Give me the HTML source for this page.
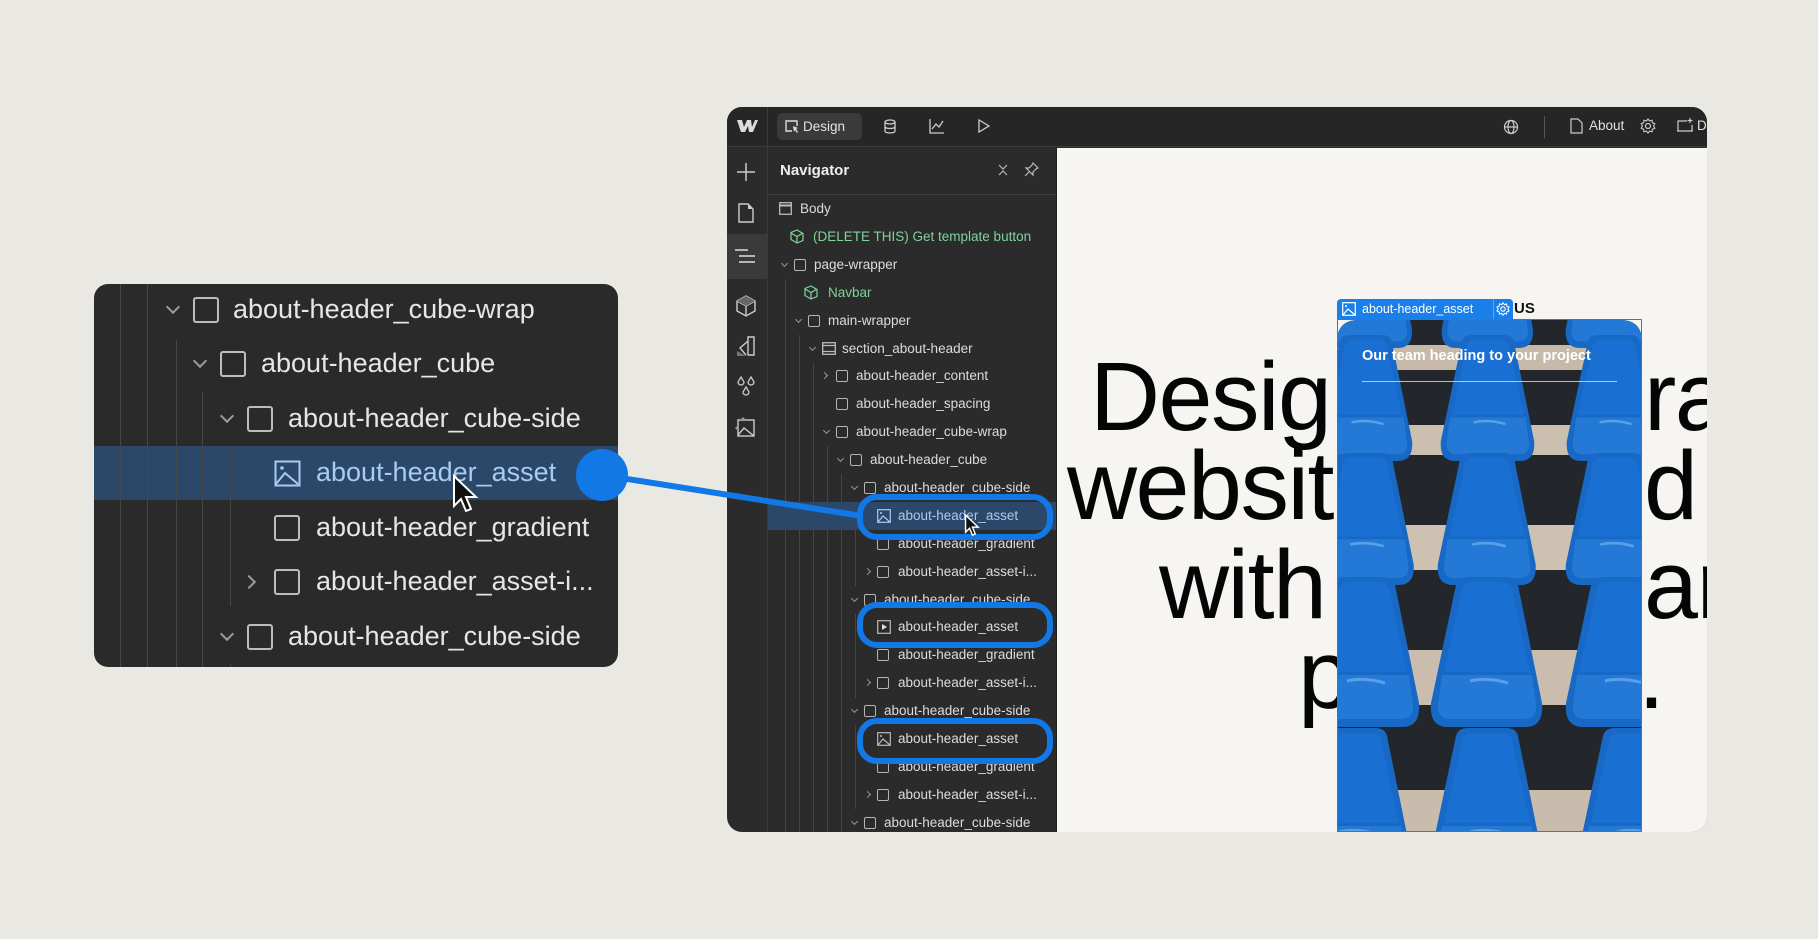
<!DOCTYPE html>
<html><head><meta charset="utf-8"><style>
*{margin:0;padding:0;box-sizing:border-box}
body{width:1818px;height:939px;background:#e9e8e2;font-family:"Liberation Sans",Arial,sans-serif;position:relative;overflow:hidden}
.a{position:absolute}
.win{position:absolute;left:0;top:0;width:1818px;height:939px;clip-path:inset(107px 111px 107px 727px round 15px)}
.row{position:absolute;left:768px;width:288px;height:28px;font-size:13.5px;color:#dcdcdc;white-space:nowrap}
.row span{position:absolute;top:6px}
.cd,.cr{position:absolute;top:10px;width:5px;height:5px;border-right:1.3px solid #9a9a9a;border-bottom:1.3px solid #9a9a9a;transform:rotate(45deg)}
.cr{top:11px;transform:rotate(-45deg)}
.bx{position:absolute;top:8px;width:12px;height:12px;border:1.3px solid #b5b5b5;border-radius:2px}
.g{color:#7fd39b}
.vl{position:absolute;width:1px;background:#444}
.lrow{position:absolute;left:94px;width:524px;height:54px;font-size:27px;color:#e6e6e6;white-space:nowrap}
.lrow span{position:absolute;top:11px}
.lcd,.lcr{position:absolute;top:19px;width:10px;height:10px;border-right:2px solid #9a9a9a;border-bottom:2px solid #9a9a9a;transform:rotate(45deg)}
.lcr{top:22px;transform:rotate(-45deg)}
.lbx{position:absolute;top:14px;width:26px;height:26px;border:2px solid #bdbdbd;border-radius:3px}
.big{position:absolute;font-size:97px;letter-spacing:-1.5px;color:#050505;line-height:1;white-space:nowrap}
.ring{position:absolute;left:857px;width:196px;height:46px;border:6px solid #1178e6;border-radius:20px}
</style></head><body>

<div class="a" style="left:94px;top:284px;width:524px;height:383px;background:#2a2a2a;border-radius:14px;overflow:hidden"></div>
<div class="a" style="left:94px;top:446px;width:524px;height:54px;background:#2c4868"></div>
<div class="vl" style="left:120px;top:284px;height:383px;background:#474747"></div>
<div class="vl" style="left:147px;top:284px;height:383px;background:#474747"></div>
<div class="vl" style="left:176px;top:340px;height:327px;background:#474747"></div>
<div class="vl" style="left:202px;top:392px;height:275px;background:#474747"></div>
<div class="vl" style="left:230px;top:446px;height:160px;background:#474747"></div>
<div class="vl" style="left:230px;top:664px;height:3px;background:#474747"></div>

<div class="lrow" style="top:283px"><i class="lcd" style="left:74px"></i><b class="lbx" style="left:99px"></b><span style="left:139px">about-header_cube-wrap</span></div>
<div class="lrow" style="top:337px"><i class="lcd" style="left:101px"></i><b class="lbx" style="left:126px"></b><span style="left:167px">about-header_cube</span></div>
<div class="lrow" style="top:392px"><i class="lcd" style="left:128px"></i><b class="lbx" style="left:153px"></b><span style="left:194px">about-header_cube-side</span></div>
<div class="lrow" style="top:446px;color:#a9cbf2"><svg class="a" style="left:180px;top:14px" width="27" height="27" viewBox="0 0 27 27"><rect x="1.5" y="1.5" width="24" height="24" fill="none" stroke="#a9cbf2" stroke-width="2"/><path d="M2 24L11 13l13 11" fill="none" stroke="#a9cbf2" stroke-width="2"/><circle cx="8" cy="8" r="1.8" fill="#a9cbf2"/></svg><span style="left:222px">about-header_asset</span></div>
<div class="lrow" style="top:501px"><b class="lbx" style="left:180px"></b><span style="left:222px">about-header_gradient</span></div>
<div class="lrow" style="top:555px"><i class="lcr" style="left:150px"></i><b class="lbx" style="left:180px"></b><span style="left:222px">about-header_asset-i...</span></div>
<div class="lrow" style="top:610px"><i class="lcd" style="left:128px"></i><b class="lbx" style="left:153px"></b><span style="left:194px">about-header_cube-side</span></div>
<svg class="a" style="left:452px;top:474px" width="30" height="42" viewBox="0 0 30 42"><path d="M2 2v30l7-7 5 12 5-2-5-12h10z" fill="#111" stroke="#fff" stroke-width="2"/></svg>

<div class="win">
  <div class="a" style="left:727px;top:107px;width:980px;height:725px;background:#2b2b2b"></div>
  <div class="a" style="left:727px;top:107px;width:980px;height:40px;background:#262626;border-bottom:1px solid #3a3a3a"></div>
  <div class="a" style="left:767px;top:107px;width:1px;height:725px;background:#3b3b3b"></div>
  <svg class="a" style="left:736px;top:118px" width="22" height="16" viewBox="0 0 22 16"><path d="M1 2h5l2 7 3-7h4l1 7 3-7h3l-5 12h-4l-1-6-3 6H5z" fill="#ddd"/></svg>
  <div class="a" style="left:777px;top:113px;width:85px;height:27px;background:#3a3a3a;border-radius:5px;color:#e2e2e2;font-size:13.5px;line-height:27px;padding-left:26px">Design</div>
  <svg class="a" style="left:784px;top:119px" width="16" height="15" viewBox="0 0 16 15"><path d="M8 12H2V2h11v5" fill="none" stroke="#ddd" stroke-width="1.4"/><path d="M9 7l5 2-2 1 2 3-1 1-2-3-1 2z" fill="#ddd"/></svg>
  <svg class="a" style="left:883px;top:119px" width="14" height="15" viewBox="0 0 14 15"><ellipse cx="7" cy="3" rx="5" ry="2" fill="none" stroke="#ccc" stroke-width="1.3"/><path d="M2 3v9c0 2.6 10 2.6 10 0V3M2 7.5c0 2.6 10 2.6 10 0" fill="none" stroke="#ccc" stroke-width="1.3"/></svg>
  <svg class="a" style="left:929px;top:118px" width="16" height="16" viewBox="0 0 16 16"><path d="M1 1v14h14M3 11l4-5 3 3 4-6" fill="none" stroke="#ccc" stroke-width="1.3"/></svg>
  <svg class="a" style="left:977px;top:118px" width="14" height="16" viewBox="0 0 14 16"><path d="M2 2l10 6-10 6z" fill="none" stroke="#ccc" stroke-width="1.3"/></svg>
  <svg class="a" style="left:1503px;top:119px" width="16" height="16" viewBox="0 0 16 16"><circle cx="8" cy="8" r="6.5" fill="none" stroke="#ccc" stroke-width="1.2"/><ellipse cx="8" cy="8" rx="3" ry="6.5" fill="none" stroke="#ccc" stroke-width="1.2"/><path d="M1.5 8h13" stroke="#ccc" stroke-width="1.2"/></svg>
  <div class="a" style="left:1544px;top:116px;width:1px;height:22px;background:#555"></div>
  <svg class="a" style="left:1570px;top:118px" width="13" height="16" viewBox="0 0 13 16"><path d="M1 1h7l4 4v10H1z" fill="none" stroke="#ccc" stroke-width="1.2"/></svg>
  <div class="a" style="left:1589px;top:118px;font-size:13.5px;color:#e2e2e2">About</div>
  <svg class="a" style="left:1640px;top:118px" width="16" height="16" viewBox="0 0 16 16"><circle cx="8" cy="8" r="2.5" fill="none" stroke="#ccc" stroke-width="1.2"/><path d="M8 1l1.6 2 2.4-.8.4 2.5 2.4 1-1.2 2.3 1.2 2.3-2.4 1-.4 2.5-2.4-.8L8 15l-1.6-2-2.4.8-.4-2.5-2.4-1L2.4 8 1.2 5.7l2.4-1 .4-2.5 2.4.8z" fill="none" stroke="#ccc" stroke-width="1.1"/></svg>
  <svg class="a" style="left:1676px;top:117px" width="18" height="17" viewBox="0 0 18 17"><path d="M11 4H2v10h14V8M1 14h16M14 1v5M11.5 3.5h5" fill="none" stroke="#ccc" stroke-width="1.2"/></svg>
  <div class="a" style="left:1697px;top:118px;font-size:13.5px;color:#e2e2e2">D</div>

  <div class="a" style="left:727px;top:234px;width:40px;height:45px;background:#3a3a3a"></div>
  <svg class="a" style="left:736px;top:162px" width="20" height="20" viewBox="0 0 20 20"><path d="M10 1v18M1 10h18" stroke="#ccc" stroke-width="1.5"/></svg>
  <svg class="a" style="left:738px;top:203px" width="16" height="20" viewBox="0 0 16 20"><path d="M1 1h9l5 5v13H1z" fill="none" stroke="#ccc" stroke-width="1.4"/><path d="M10 1v5h5z" fill="#ccc"/></svg>
  <svg class="a" style="left:734px;top:248px" width="22" height="16" viewBox="0 0 22 16"><path d="M1 2h13M5 8h16M5 14h16" stroke="#ddd" stroke-width="1.5"/></svg>
  <svg class="a" style="left:736px;top:295px" width="20" height="22" viewBox="0 0 20 22"><path d="M10 1l9 5v10l-9 5-9-5V6z M1 6l9 5 9-5M10 11v10" fill="none" stroke="#ccc" stroke-width="1.4"/><path d="M1 6l9-5 9 5-9 5z" fill="#666"/></svg>
  <svg class="a" style="left:736px;top:335px" width="20" height="22" viewBox="0 0 20 22"><path d="M12 2h6v18h-6zM12 6L4 13l6 7" fill="none" stroke="#ccc" stroke-width="1.4"/><path d="M1 16l9 5H1z" fill="#777"/></svg>
  <svg class="a" style="left:736px;top:375px" width="20" height="22" viewBox="0 0 20 22"><path d="M5 2l3 5a3 3 0 1 1-6 0zM15 2l3 5a3 3 0 1 1-6 0zM10 12l3 5a3 3 0 1 1-6 0z" fill="none" stroke="#ccc" stroke-width="1.3"/></svg>
  <svg class="a" style="left:734px;top:416px" width="22" height="22" viewBox="0 0 22 22"><rect x="4" y="4" width="16" height="16" fill="none" stroke="#ccc" stroke-width="1.4"/><path d="M4 19l6-7 10 8" fill="none" stroke="#ccc" stroke-width="1.4"/><path d="M1 12l3-3v6z M9 1l3 3H6z" fill="#999"/></svg>

  <div class="a" style="left:780px;top:162px;font-size:15px;font-weight:bold;color:#eee">Navigator</div>
  <svg class="a" style="left:997px;top:163px" width="12" height="14" viewBox="0 0 12 14"><path d="M2 2l4 4 4-4M2 12l4-4 4 4" fill="none" stroke="#bbb" stroke-width="1.2"/></svg>
  <svg class="a" style="left:1024px;top:162px" width="15" height="15" viewBox="0 0 15 15"><path d="M9 1l5 5-2 1-3 3v3l-7-7h3l3-3zM5 10l-4 4" fill="none" stroke="#bbb" stroke-width="1.2"/></svg>
  <div class="a" style="left:768px;top:194px;width:288px;height:1px;background:#3d3d3d"></div>
  <div class="a" style="left:1056px;top:147px;width:1px;height:685px;background:#1e1e1e"></div>

  <div class="a" style="left:768px;top:502px;width:288px;height:28px;background:#2c4868"></div>
  <div class="vl" style="left:785px;top:279px;height:553px"></div>
  <div class="vl" style="left:799px;top:335px;height:497px"></div>
  <div class="vl" style="left:813px;top:363px;height:469px"></div>
  <div class="vl" style="left:827px;top:446px;height:386px"></div>
  <div class="vl" style="left:841px;top:474px;height:358px"></div>
  <div class="vl" style="left:855px;top:502px;height:84px"></div>
  <div class="vl" style="left:855px;top:614px;height:84px"></div>
  <div class="vl" style="left:855px;top:725px;height:84px"></div>

  <div class="row" style="top:195px"><svg class="a" style="left:11px;top:7px" width="13" height="13"><rect x=".7" y=".7" width="11.6" height="11.6" fill="none" stroke="#bbb" stroke-width="1.3"/><path d="M1 3.5h11" stroke="#bbb" stroke-width="2"/></svg><span style="left:32px">Body</span></div>
  <div class="row g" style="top:223px"><svg class="a" style="left:22px;top:6px" width="14" height="15" viewBox="0 0 14 15"><path d="M7 1l6 3.5v7L7 14l-6-3.5v-7zM1 4l6 3.5L13 4M7 7.5V14" fill="none" stroke="#7fd39b" stroke-width="1.2"/></svg><span style="left:45px">(DELETE THIS) Get template button</span></div>
  <div class="row" style="top:251px"><i class="cd" style="left:14px"></i><b class="bx" style="left:26px"></b><span style="left:46px">page-wrapper</span></div>
  <div class="row g" style="top:279px"><svg class="a" style="left:36px;top:6px" width="14" height="15" viewBox="0 0 14 15"><path d="M7 1l6 3.5v7L7 14l-6-3.5v-7zM1 4l6 3.5L13 4M7 7.5V14" fill="none" stroke="#7fd39b" stroke-width="1.2"/></svg><span style="left:60px">Navbar</span></div>
  <div class="row" style="top:307px"><i class="cd" style="left:28px"></i><b class="bx" style="left:40px"></b><span style="left:60px">main-wrapper</span></div>
  <div class="row" style="top:335px"><i class="cd" style="left:42px"></i><svg class="a" style="left:54px;top:7px" width="14" height="13"><rect x=".7" y=".7" width="12.6" height="11.6" fill="none" stroke="#bbb" stroke-width="1.3"/><path d="M1 3.5h12M1 9.5h12" stroke="#bbb" stroke-width="1.2"/></svg><span style="left:74px">section_about-header</span></div>
  <div class="row" style="top:362px"><i class="cr" style="left:54px"></i><b class="bx" style="left:68px"></b><span style="left:88px">about-header_content</span></div>
  <div class="row" style="top:390px"><b class="bx" style="left:68px"></b><span style="left:88px">about-header_spacing</span></div>
  <div class="row" style="top:418px"><i class="cd" style="left:56px"></i><b class="bx" style="left:68px"></b><span style="left:88px">about-header_cube-wrap</span></div>
  <div class="row" style="top:446px"><i class="cd" style="left:70px"></i><b class="bx" style="left:82px"></b><span style="left:102px">about-header_cube</span></div>
  <div class="row" style="top:474px"><i class="cd" style="left:84px"></i><b class="bx" style="left:96px"></b><span style="left:116px">about-header_cube-side</span></div>
  <div class="row" style="top:502px;color:#a9cbf2"><svg class="a" style="left:109px;top:7px" width="14" height="14" viewBox="0 0 14 14"><rect x=".7" y=".7" width="12.6" height="12.6" fill="none" stroke="#a9cbf2" stroke-width="1.2"/><path d="M1 13l5-6 7 6" fill="none" stroke="#a9cbf2" stroke-width="1.2"/><circle cx="4" cy="4" r="1" fill="#a9cbf2"/></svg><span style="left:130px">about-header_asset</span></div>
  <div class="row" style="top:530px"><b class="bx" style="left:109px"></b><span style="left:130px">about-header_gradient</span></div>
  <div class="row" style="top:558px"><i class="cr" style="left:97px"></i><b class="bx" style="left:109px"></b><span style="left:130px">about-header_asset-i...</span></div>
  <div class="row" style="top:586px"><i class="cd" style="left:84px"></i><b class="bx" style="left:96px"></b><span style="left:116px">about-header_cube-side</span></div>
  <div class="row" style="top:613px"><svg class="a" style="left:109px;top:7px" width="14" height="14" viewBox="0 0 14 14"><rect x=".7" y=".7" width="12.6" height="12.6" fill="none" stroke="#bbb" stroke-width="1.2"/><path d="M5 4l5 3-5 3z" fill="#ddd"/></svg><span style="left:130px">about-header_asset</span></div>
  <div class="row" style="top:641px"><b class="bx" style="left:109px"></b><span style="left:130px">about-header_gradient</span></div>
  <div class="row" style="top:669px"><i class="cr" style="left:97px"></i><b class="bx" style="left:109px"></b><span style="left:130px">about-header_asset-i...</span></div>
  <div class="row" style="top:697px"><i class="cd" style="left:84px"></i><b class="bx" style="left:96px"></b><span style="left:116px">about-header_cube-side</span></div>
  <div class="row" style="top:725px"><svg class="a" style="left:109px;top:7px" width="14" height="14" viewBox="0 0 14 14"><rect x=".7" y=".7" width="12.6" height="12.6" fill="none" stroke="#bbb" stroke-width="1.2"/><path d="M1 13l5-6 7 6" fill="none" stroke="#bbb" stroke-width="1.2"/><circle cx="4" cy="4" r="1" fill="#bbb"/></svg><span style="left:130px">about-header_asset</span></div>
  <div class="row" style="top:753px"><b class="bx" style="left:109px"></b><span style="left:130px">about-header_gradient</span></div>
  <div class="row" style="top:781px"><i class="cr" style="left:97px"></i><b class="bx" style="left:109px"></b><span style="left:130px">about-header_asset-i...</span></div>
  <div class="row" style="top:809px"><i class="cd" style="left:84px"></i><b class="bx" style="left:96px"></b><span style="left:116px">about-header_cube-side</span></div>

  <div class="a" style="left:1057px;top:148px;width:650px;height:684px;background:#f6f5f1"></div>
  <div class="big" style="left:1090px;top:348px">Designing</div>
  <div class="big" style="left:1644px;top:348px">ra</div>
  <div class="big" style="left:1067px;top:437px">websites</div>
  <div class="big" style="left:1644px;top:437px">d a</div>
  <div class="big" style="left:1159px;top:536px">with</div>
  <div class="big" style="left:1644px;top:536px">ar</div>
  <div class="big" style="left:1298px;top:626px">purpose.</div>

  <svg class="a" style="left:1337px;top:320px" width="305" height="512" viewBox="0 0 305 512">
    <defs>
      <clipPath id="cp"><path d="M0 22Q0 0 22 0H283Q305 0 305 22V512H0z"/></clipPath>
      <g id="ch">
        <path d="M26 8Q28 0 38 0H76Q86 0 88 8L112 126Q114 150 95 150H18Q-1 150 1 126Z" fill="#1868c6"/>
        <path d="M32 12Q34 5 42 5H72Q80 5 82 12L100 95H14Z" fill="#1a6fd2"/>
        <path d="M12 98H102L106 128Q107 142 94 142H20Q7 142 8 128Z" fill="#2479d6"/>
        <path d="M40 104Q57 100 78 106" stroke="#6fb0ee" stroke-width="3" fill="none" opacity=".7"/>
      </g>
    </defs>
    <g clip-path="url(#cp)">
      <rect width="305" height="512" fill="#23262b"/>
      <rect y="25" width="305" height="25" fill="#c6b9a9"/>
      <rect y="105" width="305" height="30" fill="#cbbfb0"/>
      <rect y="205" width="305" height="45" fill="#cdc1b2"/>
      <rect y="330" width="305" height="55" fill="#cabdae"/>
      <rect y="470" width="305" height="42" fill="#c9bcac"/>
      <use href="#ch" transform="translate(-17,-95) scale(.82)"/>
      <use href="#ch" transform="translate(104,-95) scale(.82)"/>
      <use href="#ch" transform="translate(228,-95) scale(.82)"/>
      <use href="#ch" transform="translate(-19,15) scale(.84)"/>
      <use href="#ch" transform="translate(103,15) scale(.84)"/>
      <use href="#ch" transform="translate(229,15) scale(.84)"/>
      <use href="#ch" transform="translate(-22,133) scale(.88)"/>
      <use href="#ch" transform="translate(100,133) scale(.88)"/>
      <use href="#ch" transform="translate(228,133) scale(.88)"/>
      <use href="#ch" transform="translate(-30,257)"/>
      <use href="#ch" transform="translate(93,257)"/>
      <use href="#ch" transform="translate(228,257)"/>
      <use href="#ch" transform="translate(-38,408)"/>
      <use href="#ch" transform="translate(93,408)"/>
      <use href="#ch" transform="translate(240,408)"/>
    </g>
    <text x="25" y="40" font-family="Liberation Sans, sans-serif" font-size="14.5" font-weight="bold" fill="#fff">Our team heading to your project</text>
    <rect x="25" y="61" width="255" height="1" fill="#d8e3f0" opacity=".8"/>
  </svg>
  <div class="a" style="left:1337px;top:319px;width:305px;height:513px;border:1px solid #1a7fe8"></div>
  <div class="a" style="left:1337px;top:299px;width:176px;height:20px;background:#1a7fe8;border-radius:4px 4px 0 0;color:#fff;font-size:12.5px;line-height:20px;padding-left:25px">about-header_asset</div>
  <svg class="a" style="left:1342px;top:302px" width="14" height="14" viewBox="0 0 14 14"><rect x=".7" y=".7" width="12.6" height="12.6" fill="none" stroke="#fff" stroke-width="1.2"/><path d="M1 13l5-6 7 6" fill="none" stroke="#fff" stroke-width="1.2"/><circle cx="4" cy="4" r="1" fill="#fff"/></svg>
  <div class="a" style="left:1493px;top:299px;width:1px;height:20px;background:#5aa4f0"></div>
  <svg class="a" style="left:1496px;top:302px" width="14" height="14" viewBox="0 0 16 16"><circle cx="8" cy="8" r="2.5" fill="none" stroke="#fff" stroke-width="1.3"/><path d="M8 1l1.6 2 2.4-.8.4 2.5 2.4 1-1.2 2.3 1.2 2.3-2.4 1-.4 2.5-2.4-.8L8 15l-1.6-2-2.4.8-.4-2.5-2.4-1L2.4 8 1.2 5.7l2.4-1 .4-2.5 2.4.8z" fill="none" stroke="#fff" stroke-width="1.2"/></svg>
  <div class="a" style="left:1514px;top:300px;font-size:15px;font-weight:bold;color:#111">US</div>

  <div class="ring" style="top:494px"></div>
  <div class="ring" style="top:602px"></div>
  <div class="ring" style="top:718px"></div>
  <svg class="a" style="left:964px;top:514px" width="18" height="24" viewBox="0 0 30 42"><path d="M2 2v30l7-7 5 12 5-2-5-12h10z" fill="#111" stroke="#fff" stroke-width="2.5"/></svg>
</div>

<svg class="a" style="left:0;top:0" width="1818" height="939">
  <line x1="602" y1="475" x2="862" y2="516" stroke="#1178e6" stroke-width="6"/>
  <circle cx="602" cy="475" r="26" fill="#1178e6"/>
</svg>
</body></html>
